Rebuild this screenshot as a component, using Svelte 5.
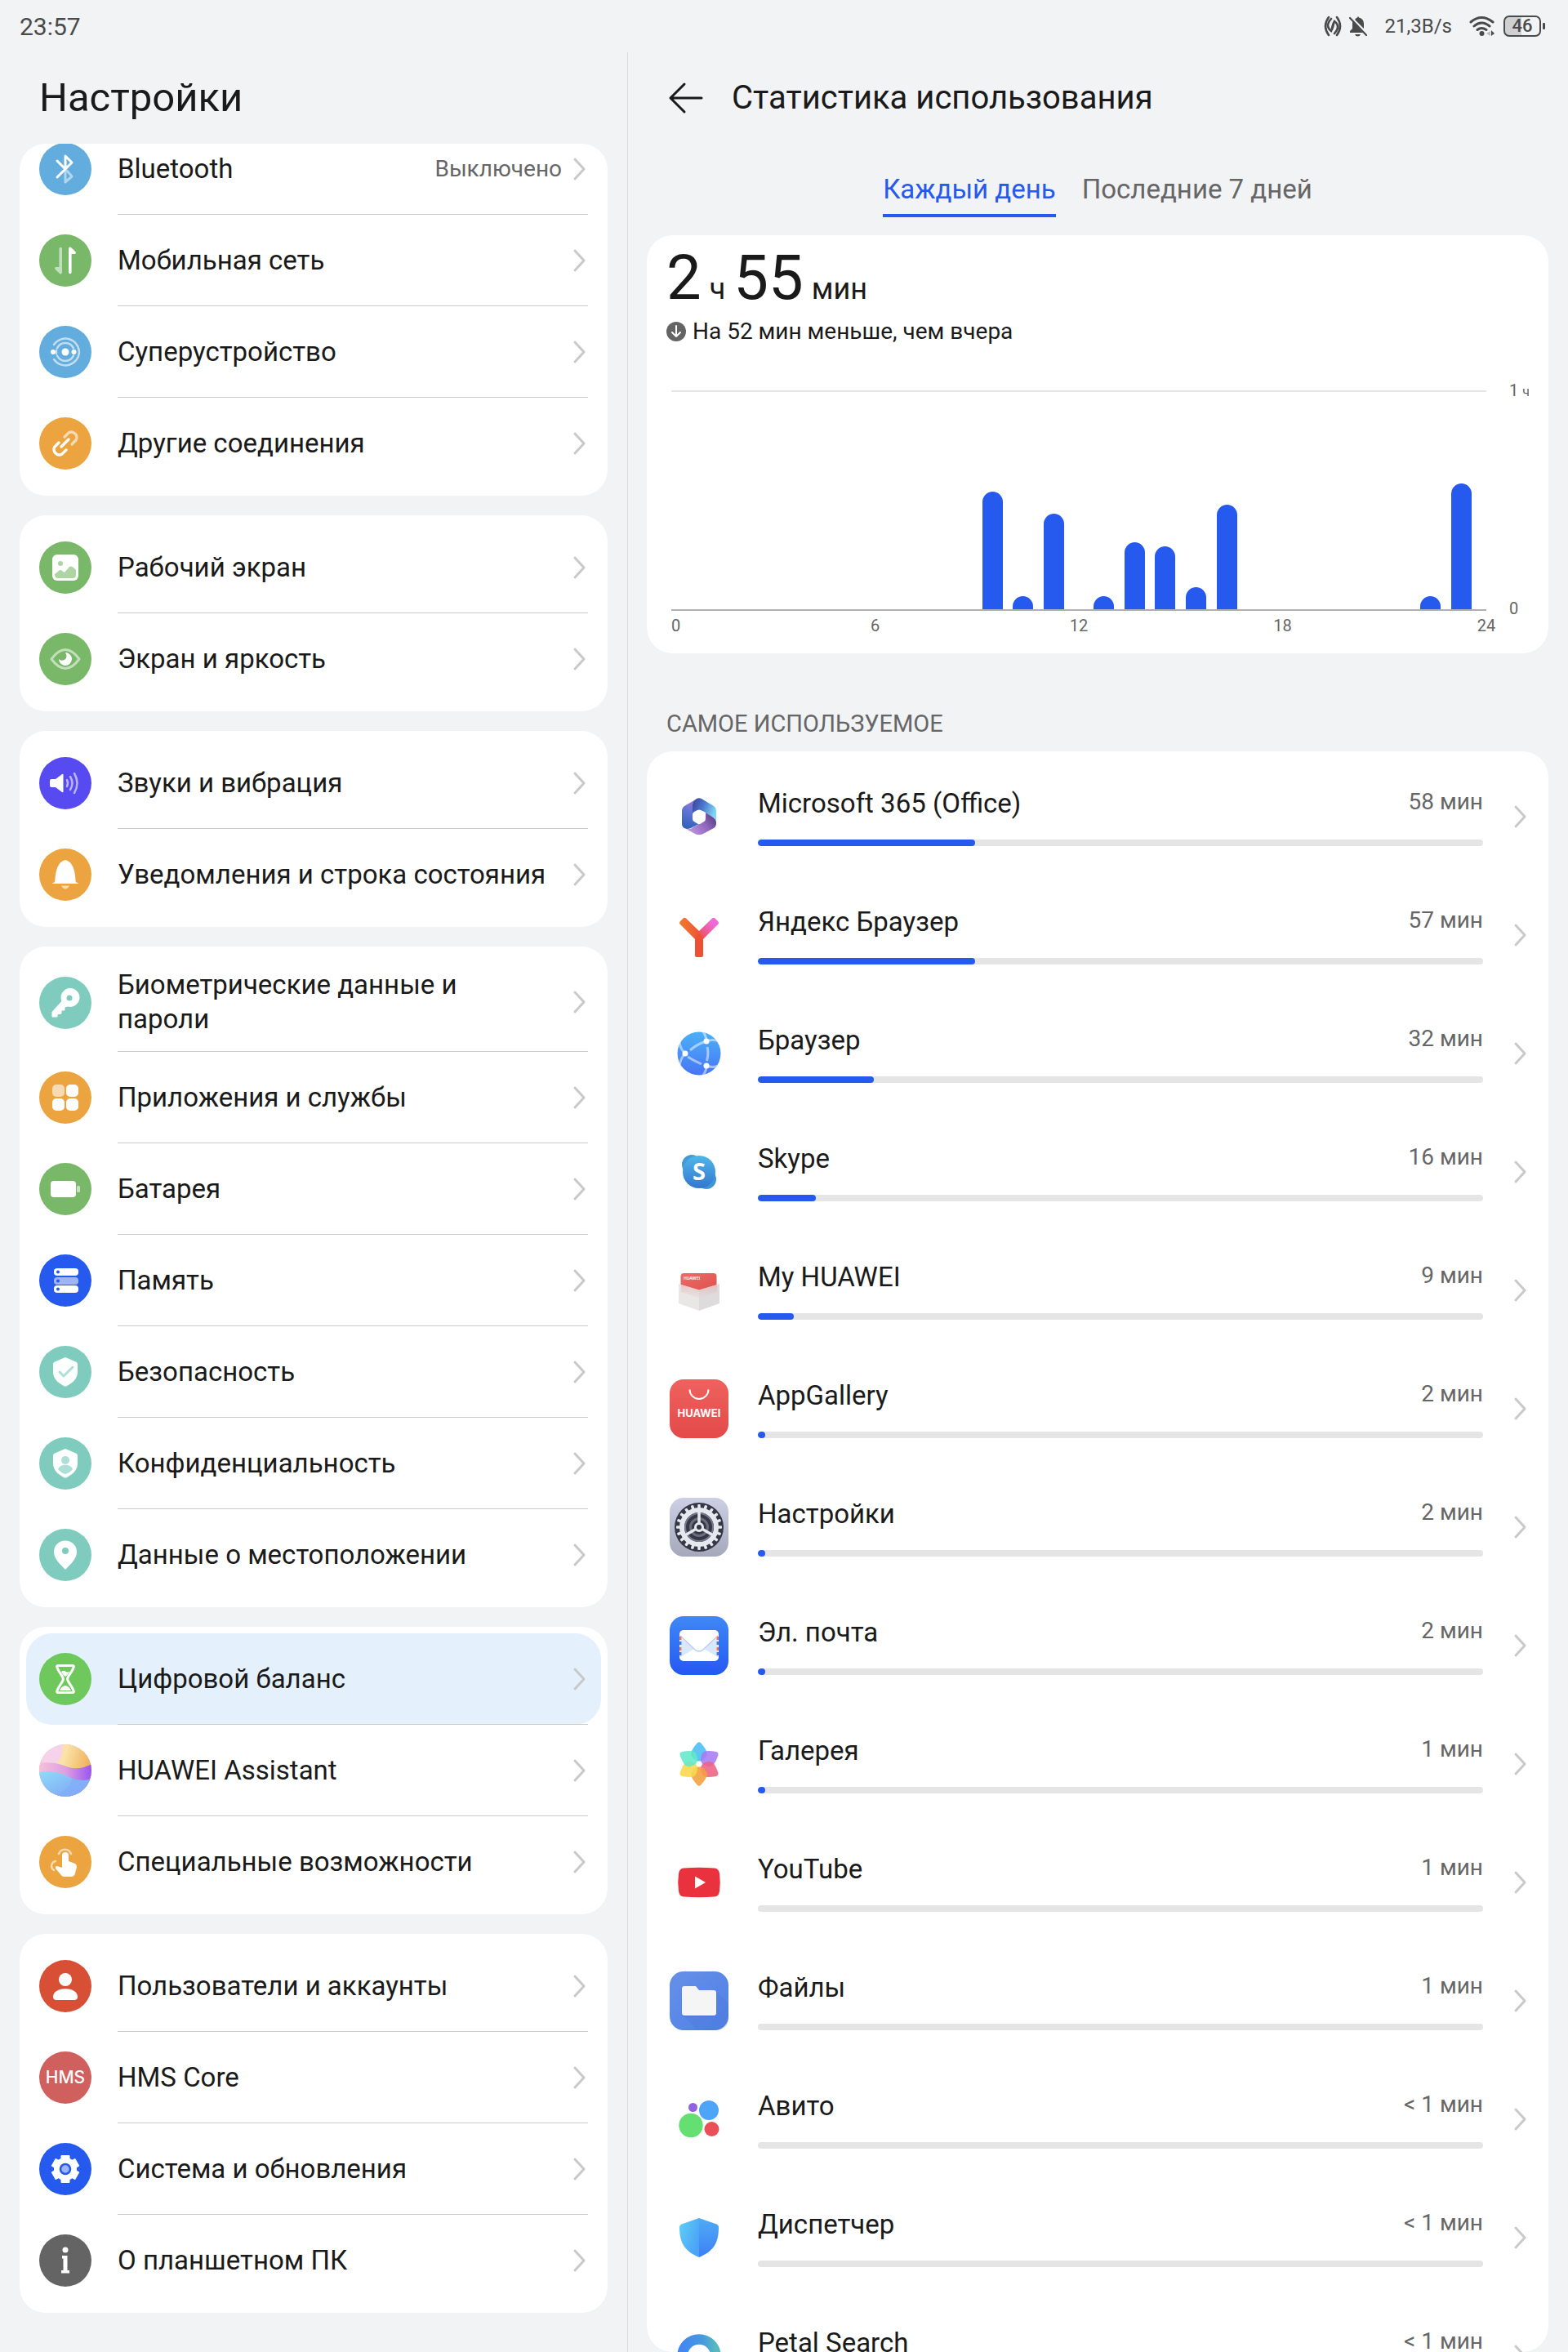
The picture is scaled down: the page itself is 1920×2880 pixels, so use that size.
<script lang="ts">
	interface IItem {
		label: string;
		icon: string;
		color: string;
		value?: string;
		active?: boolean;
	}

	const groups: IItem[][] = [
		[
			{ label: 'Bluetooth', icon: 'bluetooth', color: '#62acde', value: 'Выключено' },
			{ label: 'Мобильная сеть', icon: 'mobile', color: '#78b868' },
			{ label: 'Суперустройство', icon: 'super', color: '#62acde' },
			{ label: 'Другие соединения', icon: 'link', color: '#eba43f' }
		],
		[
			{ label: 'Рабочий экран', icon: 'picture', color: '#78b868' },
			{ label: 'Экран и яркость', icon: 'eye', color: '#78b868' }
		],
		[
			{ label: 'Звуки и вибрация', icon: 'sound', color: '#564af0' },
			{ label: 'Уведомления и строка состояния', icon: 'bell', color: '#eba43f' }
		],
		[
			{ label: 'Биометрические данные и пароли', icon: 'key', color: '#7fccbe' },
			{ label: 'Приложения и службы', icon: 'apps', color: '#eba43f' },
			{ label: 'Батарея', icon: 'battery', color: '#78b868' },
			{ label: 'Память', icon: 'storage', color: '#2659ed' },
			{ label: 'Безопасность', icon: 'security', color: '#7fccbe' },
			{ label: 'Конфиденциальность', icon: 'privacy', color: '#7fccbe' },
			{ label: 'Данные о местоположении', icon: 'location', color: '#7fccbe' }
		],
		[
			{ label: 'Цифровой баланс', icon: 'balance', color: '#6ec85b', active: true },
			{ label: 'HUAWEI Assistant', icon: 'assistant', color: '#c9a6ee' },
			{ label: 'Специальные возможности', icon: 'touch', color: '#eba43f' }
		],
		[
			{ label: 'Пользователи и аккаунты', icon: 'user', color: '#d74f35' },
			{ label: 'HMS Core', icon: 'hms', color: '#cf605d' },
			{ label: 'Система и обновления', icon: 'system', color: '#2659ed' },
			{ label: 'О планшетном ПК', icon: 'info', color: '#646464' }
		]
	];

	const apps = [
		{ name: 'Microsoft 365 (Office)', time: '58 мин', share: 30, icon: 'office' },
		{ name: 'Яндекс Браузер', time: '57 мин', share: 30, icon: 'yandex' },
		{ name: 'Браузер', time: '32 мин', share: 16, icon: 'browser' },
		{ name: 'Skype', time: '16 мин', share: 8, icon: 'skype' },
		{ name: 'My HUAWEI', time: '9 мин', share: 5, icon: 'myhuawei' },
		{ name: 'AppGallery', time: '2 мин', share: 1, icon: 'appgallery' },
		{ name: 'Настройки', time: '2 мин', share: 1, icon: 'settings' },
		{ name: 'Эл. почта', time: '2 мин', share: 1, icon: 'mail' },
		{ name: 'Галерея', time: '1 мин', share: 1, icon: 'gallery' },
		{ name: 'YouTube', time: '1 мин', share: 0, icon: 'youtube' },
		{ name: 'Файлы', time: '1 мин', share: 0, icon: 'files' },
		{ name: 'Авито', time: '< 1 мин', share: 0, icon: 'avito' },
		{ name: 'Диспетчер', time: '< 1 мин', share: 0, icon: 'manager' },
		{ name: 'Petal Search', time: '< 1 мин', share: 0, icon: 'petal' }
	];

	// percent of an hour, split in four blocks of six hours
	const hours = [
		[0, 0, 0, 0, 0, 0],
		[0, 0, 0, 54, 6, 44],
		[6, 31, 29, 10, 48, 0],
		[0, 0, 0, 0, 6, 58]
	];
	const ticks = [0, 6, 12, 18, 24];

	let tab = $state('day');

	function teeth(count: number, radius: number, w: number, h: number) {
		let out = '';
		for (let i = 0; i < count; i++) {
			out += `<rect x="${-w / 2}" y="${-radius}" width="${w}" height="${h}" rx="1" transform="rotate(${(i * 360) / count})"/>`;
		}
		return out;
	}

	// 64x64, origin in the middle
	const icons: Record<string, string> = {
		bluetooth: `<g fill="none" stroke="#fff" stroke-width="3" stroke-linecap="round" stroke-linejoin="round"><path opacity=".5" d="M0 2V16L8 9L2 2"/><path d="M-10 -10L0 0V-16L8 -8L-10 10"/></g>`,
		mobile: `<g fill="#fff"><path opacity=".55" d="M-4 -14.500a1.800 1.800 0 0 0-3.600 0V8h-4a1.500 1.500 0 0 0-1 2.500l5.500 5.500a1.800 1.800 0 0 0 3.100-1.200z"/><path d="M4 14.500a1.800 1.800 0 0 0 3.600 0V-8h4a1.500 1.500 0 0 0 1-2.500L7.100-16a1.800 1.800 0 0 0-3.100 1.200z"/></g>`,
		super: `<g fill="none" stroke="#fff" stroke-width="2.500" stroke-linecap="round" opacity=".6"><path d="M-14 -9A17 17 0 0 1 17 0A17 17 0 0 1-14 9"/><path d="M-10 -4.500A11 11 0 0 1 10 -4.500M10 4.500A11 11 0 0 1-10 4.500M-11 -2V2"/></g><g fill="#fff"><circle r="4.500"/><circle cx="-15" r="3"/><circle cx="10.500" r="3"/></g>`,
		link: `<g fill="none" stroke="#fff" stroke-width="3.400" stroke-linecap="round"><path opacity=".6" d="M-1 -8L4 -13A6.600 6.600 0 0 1 13 -4L8 1"/><path d="M4 -5L-5 4M-8 -1L-13 4A6.600 6.600 0 0 0-4 13L1 8"/></g>`,
		picture: `<rect x="-16" y="-16" width="32" height="32" rx="6" fill="#fff"/><circle cx="-6" cy="-5" r="3" fill="#add6a4"/><path d="M-13 8L-8 4Q-6 2-4 4L-1 6L5-1Q8-3 13 3V9Q13 13 9 13H-9Q-13 13-13 8Z" fill="#add6a4"/>`,
		eye: `<path d="M-17 0Q0-23 17 0Q0 23-17 0Z" fill="none" stroke="#fff" stroke-opacity=".55" stroke-width="3" stroke-linejoin="round"/><path d="M1-8A8 8 0 1 1-8 0A4 4 0 1 0 0-7.500Z" fill="#fff"/>`,
		sound: `<path d="M-17-5h5l8-6q1.500-1 1.500 1V10q0 2-1.500 1l-8-6h-5q-2 0-2-2v-6q0-2 2-2z" fill="#fff"/><g fill="none" stroke="#fff" stroke-width="2.500" stroke-linecap="round" opacity=".6"><path d="M2-4Q4 0 2 4M6-8Q11 0 6 8M11-12Q18 0 11 12"/></g>`,
		bell: `<path d="M-16 11q0-1.200 3-1.800C-12 6-13-15 0-18C13-15 12 6 13 9.200q3 .6 3 1.800z" fill="#fff"/><path d="M-5 13.500H5Q3 17.500 0 17.500T-5 13.500Z" fill="#fff" opacity=".6"/>`,
		key: `<path d="M-16 17v-6L-4-2A11 11 0 1 1 3 4L-1 5V9L-5 9V13L-10 14V17Z" fill="#fff" stroke="#fff" stroke-linejoin="round"/><circle cx="5" cy="-6" r="3.500" fill="#7fccbe"/>`,
		apps: `<g fill="#fff"><rect x="-16" y="-16" width="15" height="15" rx="5" opacity=".6"/><rect x="1" y="-16" width="15" height="15" rx="5"/><rect x="-16" y="1" width="15" height="15" rx="5"/><rect x="1" y="1" width="15" height="15" rx="5"/></g>`,
		battery: `<rect x="-18" y="-10" width="31" height="20" rx="4" fill="#fff"/><rect x="14" y="-4" width="4" height="8" rx="1.500" fill="#fff" opacity=".6"/>`,
		storage: `<g fill="#fff"><rect x="-14" y="-15" width="30" height="9" rx="4"/><rect x="-14" y="-4" width="30" height="9" rx="4" opacity=".55"/><rect x="-14" y="6" width="30" height="9" rx="4"/></g><g fill="#2659ed"><circle cx="-9" cy="-10.500" r="2"/><circle cx="-9" cy=".5" r="2"/><circle cx="-9" cy="10.500" r="2"/></g>`,
		security: `<path d="M0-18L13-12.500Q15-11.500 15-9.500V0C15 10 6 15 0 18C-6 15-15 10-15 0V-9.500Q-15-11.500-13-12.500Z" fill="#fff"/><path d="M-7 0L-2 5L9-6" fill="none" stroke="#afded6" stroke-width="3" stroke-linecap="round" stroke-linejoin="round"/>`,
		privacy: `<path d="M0-18L13-12.500Q15-11.500 15-9.500V0C15 10 6 15 0 18C-6 15-15 10-15 0V-9.500Q-15-11.500-13-12.500Z" fill="#fff"/><circle cy="-4" r="5" fill="#afded6"/><path d="M-9 7C-6 0 6 0 9 7Q5 12 0 13Q-5 12-9 7Z" fill="#afded6"/>`,
		location: `<path d="M0 18C-8 10-14 4-14-4A14 13.500 0 0 1 14-4C14 4 8 10 0 18Z" fill="#fff"/><circle cy="-5" r="4" fill="#7fccbe"/>`,
		balance: `<g fill="none" stroke="#fff" stroke-width="3" stroke-linejoin="round"><path d="M-9-16.500H9Q11-16.500 10-14C8-8 3-4 2.500 0C3 4 8 8 10 14Q11 16.500 9 16.500H-9Q-11 16.500-10 14C-8 8-3 4-2.500 0C-3-4-8-8-10-14Q-11-16.500-9-16.500Z"/></g><path d="M-5-9Q-2-11 0-9.500T5-9Q3-5 0-3Q-3-5-5-9ZM-7 14Q-5 9 0 8Q5 9 7 14Z" fill="#fff"/>`,
		assistant: `<defs><linearGradient id="as1" x1="0" y1="0" x2="1" y2=".3"><stop offset="0" stop-color="#f7c3dc"/><stop offset=".5" stop-color="#fbe3a8"/><stop offset="1" stop-color="#eeb05a"/></linearGradient><linearGradient id="as2" x1="0" x2="1"><stop offset="0" stop-color="#f6c0d8"/><stop offset=".5" stop-color="#dda0e2"/><stop offset="1" stop-color="#9a55ee"/></linearGradient><linearGradient id="as3" x1="0" y1="0" x2="1" y2="1"><stop offset="0" stop-color="#8fdcf8"/><stop offset="1" stop-color="#7e9bf5"/></linearGradient><clipPath id="asc"><circle r="32"/></clipPath></defs><g clip-path="url(#asc)"><rect x="-32" y="-32" width="64" height="64" fill="url(#as1)"/><path d="M-4-32Q-2-14-14-8Q-24-8-32-14V-32Z" fill="#f6d3ea"/><path d="M-32-8C-18-12-8-8 4-4Q18 0 32-8V32H-32Z" fill="url(#as2)"/><path d="M-32 2C-12-2 0 6 12 11Q22 14 32 10V32H-32Z" fill="url(#as3)"/><path d="M-14 32Q8 22 8 9Q22 14 32 10V32Z" fill="#82aef8" opacity=".7"/></g>`,
		touch: `<g fill="none" stroke="#fff" stroke-width="2.500" stroke-linecap="round" opacity=".6"><path d="M-8-10A8 8 0 0 1 7-10M-12-1A6 6 0 0 0-14 10"/></g><path d="M-4-8A3.800 3.800 0 0 1 4-8V-1L12 2Q14 3 14 6L12 14Q11 18 7 18H-2Q-4 18-6 15L-12 8Q-13 5-10 5L-4 7Z" fill="#fff"/>`,
		user: `<circle cy="-8" r="8" fill="#fff"/><path d="M-15 13C-15 0 15 0 15 13Q15 17 11 17H-11Q-15 17-15 13Z" fill="#fff"/>`,
		hms: `<text y="7" text-anchor="middle" font-family="Inter, sans-serif" font-size="21" font-weight="500" fill="#fff">HMS</text>`,
		system: `<g fill="#fff"><circle r="14"/>${teeth(6, 17, 11, 12)}</g><circle r="6" fill="#9fb5f7" stroke="#2659ed" stroke-width="2.500"/>`,
		info: `<circle cy="-13" r="3.500" fill="#fff"/><path d="M-4-6H2.500V12H5V15.500H-5V12H-2.500V-2.500H-4Z" fill="#fff"/>`
	};

	// 72x72, origin in the top left corner
	const appIcons: Record<string, string> = {
		office: `<defs><linearGradient id="of1" x1="0" x2="1" y2=".4"><stop offset="0" stop-color="#3a3f9a"/><stop offset=".5" stop-color="#4a78cf"/><stop offset="1" stop-color="#7dd6f2"/></linearGradient><linearGradient id="of2" x1=".6" y1="0" x2=".4" y2="1"><stop offset="0" stop-color="#9c7bd6"/><stop offset=".5" stop-color="#5a72d4"/><stop offset="1" stop-color="#2f62b8"/></linearGradient><linearGradient id="of3" x1="1" x2="0" y2=".5"><stop offset="0" stop-color="#4a3375"/><stop offset=".5" stop-color="#8f67bd"/><stop offset="1" stop-color="#bb8fdf"/></linearGradient></defs><path d="M30 16L18 23Q15 25 15 28V45Q15 50 21 51Q25 51 28 49L36 45Q28 42 28 36V22Q28 18 33 14Z" fill="url(#of2)"/><path d="M28 36V22Q28 17 33 14Q36 12.500 39 14L54 23Q57 25 57 29V44Q57 38 52 36L44 31Q36 25 28 33Z" fill="url(#of1)"/><path d="M44 31L52 36Q57 39 57 44Q57 48 54 50L40 57.500Q36 59 32 57.500L20 51Q25 52 29 49L38 44Q45 40 44 31Z" fill="url(#of3)"/><path d="M34 28Q36 27 38 28L42 30Q44 31 44 34V38Q44 41 42 42L38 44.500Q36 45.500 34 44.500L30 42Q28 41 28 38V34Q28 31 30 30Z" fill="#fff"/>`,
		yandex: `<defs><linearGradient id="ya1" x1="0" x2="1"><stop offset="0" stop-color="#ee7a30"/><stop offset=".5" stop-color="#ee6533"/><stop offset="1" stop-color="#ee4a36"/></linearGradient><linearGradient id="ya2" x1="0" y1="1" x2="1" y2="0"><stop offset="0" stop-color="#ee4a40"/><stop offset=".7" stop-color="#ee6ad8"/></linearGradient></defs><path d="M31 41L13 23Q11 21 13 19L16.500 15.500Q18 14 20 15.500L36 31L41 41Z" fill="url(#ya1)"/><path d="M36 31L52 15.500Q54 14 55.500 15.500L59 19Q61 21 59 23L41 41H35Z" fill="url(#ya2)"/><path d="M31 39L36 34L41 39V61Q41 63 39 63H33Q31 63 31 61Z" fill="#ed5033"/>`,
		browser: `<defs><linearGradient id="br1" x2="0" y2="1"><stop offset="0" stop-color="#4bb0f7"/><stop offset="1" stop-color="#4776f5"/></linearGradient><clipPath id="brc"><circle cx="36" cy="36" r="26.500"/></clipPath></defs><circle cx="36" cy="36" r="26.500" fill="url(#br1)"/><g fill="none" stroke="#fff" stroke-opacity=".5" stroke-width="3" clip-path="url(#brc)"><path d="M25 32Q33 25 42 22M22 40Q30 45 39 49M46 28Q48 36 45.500 45M40 8Q45 14 45 21Q53 18 60 21M40 64Q45 58 45 51Q53 54 60 51M12 23Q14 32 19 36Q14 41 12 50"/></g><g fill="#fff"><circle cx="19" cy="36" r="3.500"/><circle cx="45" cy="21" r="3.500"/><circle cx="45" cy="51" r="3.500"/></g>`,
		skype: `<defs><linearGradient id="sk1" x2="0" y2="1"><stop offset="0" stop-color="#4fb7e8"/><stop offset="1" stop-color="#3376d0"/></linearGradient></defs><circle cx="27" cy="27" r="12" fill="#429bd6"/><circle cx="45" cy="45" r="12" fill="#3f95d8"/><circle cx="36" cy="36" r="20" fill="url(#sk1)"/><text x="36" y="46" text-anchor="middle" font-family="'Open Sans', sans-serif" font-size="29" font-weight="700" fill="#fff">S</text>`,
		myhuawei: `<defs><linearGradient id="mh1" x2="0" y2="1"><stop offset="0" stop-color="#ee9a98"/><stop offset="1" stop-color="#dedede"/></linearGradient><linearGradient id="mh2" x2="1" y2="1"><stop offset="0" stop-color="#ee6b69"/><stop offset="1" stop-color="#dd504c"/></linearGradient></defs><path d="M13.500 19Q13.500 15 17.500 15H53.500Q57.500 15 57.500 19V32L36 38L13.500 32Z" fill="url(#mh2)"/><path d="M11 28L36 35.500V61L11 52Z" fill="#e9e6e6"/><path d="M61 28L36 35.500V61L61 52Z" fill="#dddbdb"/><path d="M14 29L36 35.500L58 29V38L36 45L14 38Z" fill="url(#mh1)" opacity=".4"/><text x="17" y="23" font-family="Inter, sans-serif" font-size="5" font-weight="600" fill="#fff">HUAWEI</text>`,
		appgallery: `<defs><linearGradient id="ag1" x2="0" y2="1"><stop offset="0" stop-color="#ee625e"/><stop offset="1" stop-color="#e34a49"/></linearGradient></defs><rect width="72" height="72" rx="17" fill="url(#ag1)"/><path d="M24.500 12.500A11.500 11.500 0 0 0 47.500 12.500" fill="none" stroke="#fff" stroke-width="2"/><text x="36" y="46" text-anchor="middle" font-family="Inter, sans-serif" font-size="13" font-weight="700" fill="#fff">HUAWEI</text>`,
		settings: `<defs><linearGradient id="se1" x2="0" y2="1"><stop offset="0" stop-color="#cdd0e4"/><stop offset="1" stop-color="#a5a7bb"/></linearGradient></defs><rect width="72" height="72" rx="17" fill="url(#se1)"/><g transform="translate(36 36)"><circle r="30" fill="#363846"/><g fill="#e6e8f0">${teeth(20, 28, 3.5, 6)}</g><circle r="21" fill="#363846" stroke="#e6e8f0" stroke-width="6"/><circle r="17" fill="none" stroke="#75798a" stroke-width="2"/><circle r="10.500" fill="none" stroke="#6a6d7c" stroke-width="3"/><g stroke="#e6e8f0" stroke-width="3.500"><path d="M0 0V-20"/><path d="M0 0L17.300 10"/><path d="M0 0L-17.300 10"/></g><circle r="4.500" fill="#363846" stroke="#e6e8f0" stroke-width="3"/></g>`,
		mail: `<defs><linearGradient id="ma1" x2="0" y2="1"><stop offset="0" stop-color="#3f88f5"/><stop offset="1" stop-color="#2558f3"/></linearGradient></defs><rect width="72" height="72" rx="17" fill="url(#ma1)"/><rect x="12" y="17" width="48" height="38" rx="5" fill="#fff"/><path d="M13 26L30 40L13 50ZM59 26L42 40L59 50Z" fill="#d9e7fb"/><path d="M13 24L31 41Q36 45 41 41L59 24" fill="#fff" stroke="#b9cdec" stroke-width="1.500"/><g stroke-width="2.500"><path d="M13.200 25V50M58.800 25V50" stroke="#ea7858" stroke-dasharray="4 9"/><path d="M13.200 31V52M58.800 31V52" stroke="#4a79e0" stroke-dasharray="4 9"/></g>`,
		gallery: `<g transform="translate(36 36)">${['#48bdf4', '#a77bf2', '#ee6284', '#f2a13c', '#f9d84a', '#62e8c8']
			.map((c, i) => `<path d="M0-3C-5-4-10-9-10-13Q-9-18-2.500-25.500Q0-28 2.500-25.500Q9-18 10-13C10-9 5-4 0-3Z" fill="${c}" opacity=".88" transform="rotate(${i * 60})"/>`)
			.join('')}<circle r="3.500" fill="#fff"/></g>`,
		youtube: `<path d="M17 18.500Q36 17 55 18.500Q60 19 61 25Q62.500 36 61 47Q60 53 55 53.500Q36 55 17 53.500Q12 53 11 47Q9.500 36 11 25Q12 19 17 18.500Z" fill="#ea323e"/><path d="M31 28.500L44 36L31 43.500Z" fill="#fff"/>`,
		files: `<defs><linearGradient id="fi1" x2="1" y2="1"><stop offset="0" stop-color="#6690e8"/><stop offset="1" stop-color="#5080e6"/></linearGradient></defs><rect width="72" height="72" rx="17" fill="url(#fi1)"/><path d="M57 25L72 38V60Q70 70 58 72H34L16 54Z" fill="#4c77d6" opacity=".3"/><path d="M15 22Q15 19 18 19H32L37 23.500H54Q57 23.500 57 26.500V52Q57 55 54 55H18Q15 55 15 52Z" fill="#3c63b8" opacity=".5"/><path d="M15 21Q15 18 18 18H32L36 23H54Q57 23 57 26V51Q57 54 54 54H18Q15 54 15 51Z" fill="#f5f5f5"/>`,
		avito: `<circle cx="28.500" cy="21.500" r="5.500" fill="#9162df"/><circle cx="48" cy="25" r="12" fill="#4da4f8"/><circle cx="26" cy="43.500" r="14.700" fill="#66df72"/><circle cx="51.500" cy="48" r="9" fill="#eb4f58"/>`,
		manager: `<defs><linearGradient id="mn1" x2="1" y2=".6"><stop offset="0" stop-color="#5fd0f7"/><stop offset="1" stop-color="#4ba2f6"/></linearGradient><linearGradient id="mn2" x2="0" y2="1"><stop offset="0" stop-color="#4fabf6"/><stop offset="1" stop-color="#3c80f5"/></linearGradient></defs><path d="M36 12L14.500 19.500Q12 20.500 12 23C12 41 17 52 36 60Z" fill="url(#mn1)"/><path d="M36 12L57.500 19.500Q60 20.500 60 23C60 41 55 52 36 60Z" fill="url(#mn2)"/>`,
		petal: `<defs><linearGradient id="pe1" x2="1"><stop offset="0" stop-color="#4387f3"/><stop offset=".6" stop-color="#459ade"/><stop offset="1" stop-color="#59b9c0"/></linearGradient></defs><circle cx="36" cy="36" r="20.500" fill="none" stroke="url(#pe1)" stroke-width="12.500"/>`
	};
</script>

{#snippet chevron()}
	<svg class="chevron" viewBox="0 0 20 32" aria-hidden="true">
		<path d="M4 4L15 16L4 28" />
	</svg>
{/snippet}

<div class="screen">
	<header class="status">
		<span class="clock">23:57</span>
		<div class="indicators">
			<svg width="22" height="26" viewBox="0 0 22 26" fill="none" stroke="#4a4a4a" stroke-width="2.6" stroke-linecap="round">
				<path d="M6 2Q-2 13 6 24M9 4Q1 13 9 19Q12 13 12 9M16 2Q24 13 16 24M13 22Q21 13 13 7Q10 13 10 17" />
			</svg>
			<svg class="bell" width="24" height="26" viewBox="0 0 24 26">
				<path d="M2 21V19L5 16V7L18 21ZM8 5Q9 3 11 2.500Q12 0 13 2.500Q19 4 19 10V16L8 5ZM8 23H15Q14 25.500 11.500 25.500T8 23Z" fill="#4a4a4a" />
				<path d="M2 3L22 24" stroke="#4a4a4a" stroke-width="2.200" stroke-linecap="round" />
			</svg>
			<span class="speed">21,3B/s</span>
			<svg width="32" height="26" viewBox="0 0 32 26">
				<g fill="none" stroke="#4a4a4a" stroke-width="3" stroke-linecap="round">
					<path d="M2 8Q15-3 29 8M6 13Q15 5 25 13M10 17.500Q15 13.500 21 17.500" />
				</g>
				<circle cx="15.500" cy="22" r="3" fill="#4a4a4a" />
				<path d="M26 19V25L21 22Z" fill="#bbb" />
				<path d="M27 18V25L31 22Z" fill="#4a4a4a" />
			</svg>
			<div class="battery">46</div>
			<span class="nub"></span>
		</div>
	</header>

	<div class="panes">
		<aside class="menu">
			<h1>Настройки</h1>
			<nav>
				{#each groups as group, i}
					<ul class="card group" class:scrolled={i === 0}>
						{#each group as item}
							<li class="row" class:active={item.active}>
								<a href="#{item.icon}">
									<svg class="round" viewBox="-32 -32 64 64" aria-hidden="true">
										<circle r="32" fill={item.color} />
										{@html icons[item.icon]}
									</svg>
									<div class="line">
										<span class="label">{item.label}</span>
										{#if item.value}
											<span class="value">{item.value}</span>
										{/if}
										{@render chevron()}
									</div>
								</a>
							</li>
						{/each}
					</ul>
				{/each}
			</nav>
		</aside>

		<main>
			<div class="title">
				<button class="back" aria-label="Назад">
					<svg width="48" height="48" viewBox="0 0 48 48" fill="none" stroke="#1a1a1a" stroke-width="3" stroke-linecap="round" stroke-linejoin="round">
						<path d="M22 7L5 24L22 41M5 24H43" />
					</svg>
				</button>
				<h2>Статистика использования</h2>
			</div>

			<div class="tabs" role="tablist">
				<button role="tab" class:selected={tab === 'day'} aria-selected={tab === 'day'} onclick={() => (tab = 'day')}>Каждый день</button>
				<button role="tab" class:selected={tab === 'week'} aria-selected={tab === 'week'} onclick={() => (tab = 'week')}>Последние 7 дней</button>
			</div>

			<section class="card summary">
				<p class="total">2<small>ч</small>55<small>мин</small></p>
				<p class="diff">
					<svg width="24" height="24" viewBox="0 0 24 24" aria-hidden="true">
						<circle cx="12" cy="12" r="12" fill="#646464" />
						<path d="M12 5V18M7 13L12 18L17 13" fill="none" stroke="#fff" stroke-width="2" stroke-linecap="round" stroke-linejoin="round" />
					</svg>
					На 52 мин меньше, чем вчера
				</p>
				<div class="chart">
					<div class="plot">
						{#each hours as block}
							<div class="block">
								{#each block as value}
									<div class="bar" style="height: {value}%"></div>
								{/each}
							</div>
						{/each}
					</div>
					<div class="scale">
						<span class="top">1 <small>ч</small></span>
						<span>0</span>
					</div>
					<div class="ticks">
						{#each ticks as tick}
							<span>{tick}</span>
						{/each}
					</div>
				</div>
			</section>

			<h3>САМОЕ ИСПОЛЬЗУЕМОЕ</h3>

			<ul class="card apps">
				{#each apps as app}
					<li>
						<a class="app" href="#{app.icon}">
							<svg class="app-icon" viewBox="0 0 72 72" aria-hidden="true">
								{@html appIcons[app.icon]}
							</svg>
							<div class="usage">
								<div class="head">
									<span class="name">{app.name}</span>
									<span class="time">{app.time}</span>
								</div>
								<div class="track">
									<div class="fill" style="width: {app.share}%"></div>
								</div>
							</div>
							{@render chevron()}
						</a>
					</li>
				{/each}
			</ul>
		</main>
	</div>
</div>

<style>
	:global(body) {
		margin: 0;
		background: #f1f3f5;
	}

	.screen {
		height: 100vh;
		display: flex;
		flex-direction: column;
		overflow: hidden;
		background: #f1f3f5;
		color: #1a1a1a;
		font-family: Roboto, "Noto Sans", sans-serif;
	}

	h1, h2, h3, p, ul {
		margin: 0;
		padding: 0;
		font-weight: 400;
	}

	ul {
		list-style: none;
	}

	a {
		color: inherit;
		text-decoration: none;
	}

	button {
		border: none;
		padding: 0;
		background: none;
		font-family: inherit;
		cursor: pointer;
	}

	.card {
		background: #fff;
		border-radius: 32px;
	}

	.status {
		height: 64px;
		flex: none;
		padding: 0 28px 0 24px;
		display: flex;
		align-items: center;
		justify-content: space-between;
		color: #4a4a4a;
	}

	.clock {
		font-size: 30px;
	}

	.indicators {
		display: flex;
		align-items: center;
	}

	.bell {
		margin-left: 8px;
	}

	.speed {
		margin: 0 21px;
		font-size: 24px;
	}

	.battery {
		width: 42px;
		height: 22px;
		margin-left: 10px;
		border: 2px solid #4a4a4a;
		border-radius: 7px;
		background: linear-gradient(90deg, #cfd0d1 48%, #f1f3f5 48%);
		font-size: 22px;
		font-weight: 500;
		line-height: 22px;
		text-align: center;
	}

	.nub {
		width: 3px;
		height: 8px;
		margin-left: 2px;
		border-radius: 1px;
		background: #4a4a4a;
	}

	.panes {
		flex: 1;
		min-height: 0;
		display: flex;
	}

	.menu {
		box-sizing: border-box;
		width: 40%;
		padding: 0 24px;
		overflow: hidden;
	}

	h1 {
		padding-left: 24px;
		font-size: 49px;
		line-height: 112px;
	}

	nav {
		display: flex;
		flex-direction: column;
		gap: 24px;
	}

	.group {
		padding: 8px 0;
	}

	/* the list is scrolled, so its first row goes under the header */
	.scrolled {
		padding-top: 0;
		overflow: hidden;
	}

	.scrolled .row:first-child {
		margin-top: -25px;
	}

	.row a {
		margin: 0 8px;
		padding: 0 16px;
		display: flex;
		align-items: center;
		gap: 32px;
		border-radius: 32px;
	}

	.active a {
		background: #e5f0fd;
	}

	.round {
		flex: none;
		width: 64px;
		height: 64px;
	}

	.line {
		box-sizing: border-box;
		flex: 1;
		min-height: 112px;
		padding: 18px 0;
		display: flex;
		align-items: center;
		border-bottom: 1px solid #cccccc;
	}

	.row:last-child .line {
		border-bottom-color: transparent;
	}

	.label {
		flex: 1;
		margin-right: 28px;
		font-size: 33px;
		line-height: 42px;
	}

	.value {
		margin-right: 12px;
		font-size: 28px;
		color: #666666;
	}

	.chevron {
		flex: none;
		width: 20px;
		height: 32px;
		fill: none;
		stroke: #c8c9cb;
		stroke-width: 3;
		stroke-linecap: round;
		stroke-linejoin: round;
	}

	main {
		flex: 1;
		padding: 0 24px 0 23px;
		border-left: 1px solid #d9dbdd;
		display: flex;
		flex-direction: column;
	}

	.title {
		height: 112px;
		flex: none;
		padding-left: 24px;
		display: flex;
		align-items: center;
		gap: 32px;
	}

	.back {
		height: 48px;
	}

	h2 {
		font-size: 40px;
		line-height: 48px;
	}

	.tabs {
		margin: 36px 0 22px;
		display: flex;
		justify-content: center;
		gap: 32px;
	}

	.tabs button {
		padding-bottom: 10px;
		border-bottom: 4px solid transparent;
		font-size: 33px;
		line-height: 40px;
		color: #666666;
	}

	.tabs .selected {
		border-color: #2659ed;
		color: #2659ed;
	}

	.summary {
		padding: 8px 24px 22px;
	}

	.total {
		font-size: 76px;
		line-height: 88px;
	}

	.total small {
		margin: 0 10px;
		font-size: 36px;
		line-height: 36px;
	}

	.diff {
		display: flex;
		align-items: center;
		gap: 8px;
		font-size: 28px;
		line-height: 44px;
	}

	.chart {
		margin-top: 50px;
		padding-left: 6px;
		display: grid;
		grid-template-columns: 1fr 52px;
	}

	.plot {
		height: 266px;
		display: flex;
		border-top: 2px solid #e5e5e5;
		border-bottom: 2px solid #b0b0b0;
	}

	.block {
		flex: 1;
		padding: 0 18px;
		display: flex;
		align-items: flex-end;
		justify-content: space-between;
	}

	.bar {
		width: 25px;
		border-radius: 13px 13px 0 0;
		background: #2659ed;
	}

	.scale {
		margin: -12px 0 -9px;
		padding-left: 28px;
		display: flex;
		flex-direction: column;
		justify-content: space-between;
		font-size: 20px;
		line-height: 24px;
		color: #666666;
	}

	.top {
		height: 20px;
		overflow: hidden;
		white-space: nowrap;
	}

	.top small {
		font-size: 16px;
	}

	.ticks {
		margin-top: 6px;
		display: flex;
		justify-content: space-between;
		font-size: 20px;
		line-height: 24px;
		color: #666666;
	}

	.ticks span {
		width: 0;
		display: flex;
		justify-content: center;
	}

	.ticks span:first-child {
		justify-content: flex-start;
	}

	h3 {
		margin: 66px 0 14px;
		padding-left: 24px;
		font-size: 29px;
		line-height: 40px;
		color: #666666;
	}

	.apps {
		flex: 1;
		min-height: 0;
		padding-top: 8px;
		overflow: hidden;
	}

	.app {
		height: 144px;
		margin-bottom: 1px;
		padding: 0 24px 0 28px;
		display: flex;
		align-items: center;
		gap: 36px;
	}

	.app-icon {
		flex: none;
		width: 72px;
		height: 72px;
	}

	.usage {
		flex: 1;
	}

	.head {
		display: flex;
		justify-content: space-between;
		margin-bottom: 24px;
	}

	.name {
		font-size: 33px;
		line-height: 40px;
	}

	.time {
		font-size: 28px;
		line-height: 36px;
		color: #666666;
	}

	.track {
		height: 8px;
		border-radius: 4px;
		background: #e5e5e5;
		overflow: hidden;
	}

	.fill {
		height: 8px;
		border-radius: 4px;
		background: #2659ed;
	}
</style>
